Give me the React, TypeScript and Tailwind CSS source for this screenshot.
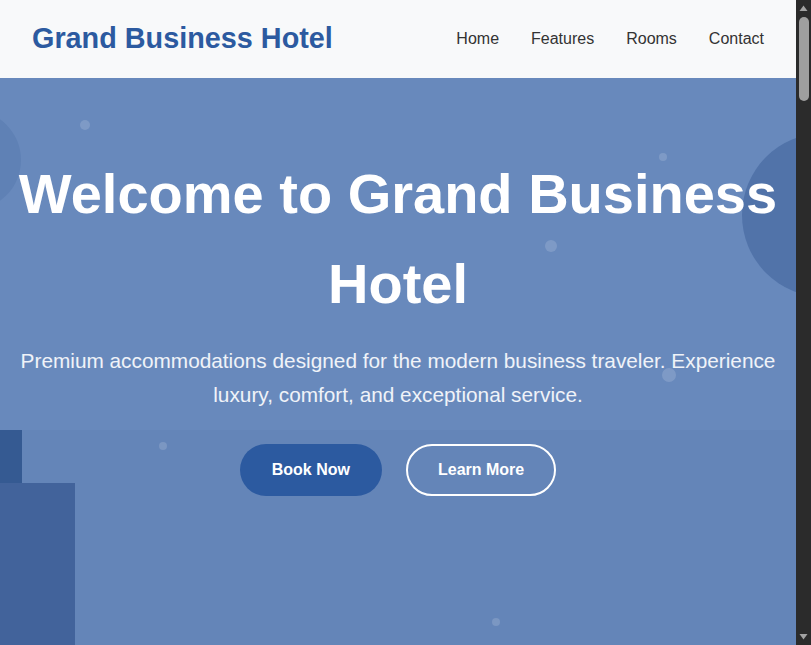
import React from "react";

const dots = [
  { x: 85, y: 125, r: 5 },
  { x: 663, y: 157, r: 4 },
  { x: 551, y: 246, r: 6 },
  { x: 669, y: 375, r: 7 },
  { x: 163, y: 446, r: 4 },
  { x: 496, y: 622, r: 4 },
];

function FakeScrollbar() {
  return (
    <div className="flex h-screen w-[15px] shrink-0 flex-col items-center bg-[#2b2b2b]">
      <svg width="15" height="17" viewBox="0 0 15 17" className="shrink-0">
        <path d="M3.5 11 L7.5 5.5 L11.5 11 Z" fill="#a3a3a3" />
      </svg>
      <div className="flex-1 w-full px-[2px]">
        <div className="h-[84px] w-[10px] mx-auto rounded-full bg-[#9f9f9f]" />
      </div>
      <svg width="15" height="17" viewBox="0 0 15 17" className="shrink-0">
        <path d="M3.5 6 L7.5 11.5 L11.5 6 Z" fill="#a3a3a3" />
      </svg>
    </div>
  );
}

export default function App() {
  return (
    <div
      className="flex h-screen overflow-hidden bg-white text-[#333]"
      style={{ fontFamily: '"Liberation Sans", Arial, sans-serif' }}
    >
      <div className="min-w-0 flex-1 overflow-y-auto [scrollbar-width:none]">
        <header className="sticky top-0 z-20 flex h-[78px] items-center justify-between bg-[#f8f9fa] px-8">
          <div className="text-[1.8rem] font-bold text-[#2c5aa0]">Grand Business Hotel</div>
          <nav className="flex gap-8 text-base text-[#333]">
            <a href="#home">Home</a>
            <a href="#features">Features</a>
            <a href="#rooms">Rooms</a>
            <a href="#contact">Contact</a>
          </nav>
        </header>

        <section
          id="home"
          className="relative -mt-[78px] flex h-screen items-center justify-center overflow-hidden bg-[#6889bc] px-4 text-center text-white"
        >
          <div className="absolute inset-x-0 bottom-0 h-1/3 bg-[#6485b8]">
            <div className="absolute left-0 top-0 h-[53px] w-[22px] bg-[#355a92]" />
            <div className="absolute bottom-0 left-0 h-[162px] w-[75px] bg-[#42639b]" />
          </div>
          <div className="absolute left-[-79px] top-[110px] h-[100px] w-[100px] rounded-full bg-[#5f81b5]" />
          <div className="absolute left-[742px] top-[133px] h-[164px] w-[164px] rounded-full bg-[#5173a9]" />
          {dots.map((d, i) => (
            <div
              key={i}
              className="absolute rounded-full bg-white/15"
              style={{ left: d.x - d.r, top: d.y - d.r, width: d.r * 2, height: d.r * 2 }}
            />
          ))}

          <div className="relative z-10 w-full">
            <h1 className="mb-4 text-[3.5rem] font-bold leading-[1.6]">Welcome to Grand Business Hotel</h1>
            <p className="mx-auto mb-[33px] max-w-[770px] text-[1.3rem] leading-[1.6] text-white/90">
              Premium accommodations designed for the modern business traveler. Experience luxury, comfort, and
              exceptional service.
            </p>
            <div className="flex justify-center gap-6">
              <a
                href="#rooms"
                className="rounded-full bg-[#2c5aa0] px-8 py-4 text-base font-bold leading-5 text-white"
              >
                Book Now
              </a>
              <a
                href="#features"
                className="rounded-full border-2 border-white px-[30px] py-[14px] text-base font-bold leading-5 text-white"
              >
                Learn More
              </a>
            </div>
          </div>
        </section>

        <section id="features" className="min-h-[1400px] bg-[#f8f9fa] px-8 py-20 text-center">
          <h2 className="mb-10 text-[2.5rem] font-bold text-[#2c5aa0]">Hotel Features</h2>
          <div className="grid grid-cols-2 gap-8">
            {["Business Center", "High-Speed WiFi", "Meeting Rooms", "Fitness Center", "Restaurant", "Airport Shuttle"].map(
              (f) => (
                <div key={f} className="rounded-xl bg-white p-8 shadow">
                  <h3 className="mb-2 text-xl font-bold text-[#2c5aa0]">{f}</h3>
                  <p className="text-[#555]">Everything you need for a productive and comfortable stay.</p>
                </div>
              )
            )}
          </div>
        </section>

        <section id="rooms" className="min-h-[1500px] bg-white px-8 py-20 text-center">
          <h2 className="mb-10 text-[2.5rem] font-bold text-[#2c5aa0]">Our Rooms</h2>
          <div className="grid grid-cols-1 gap-8">
            {["Executive Room", "Business Suite", "Presidential Suite"].map((r) => (
              <div key={r} className="h-[360px] rounded-xl bg-[#f8f9fa] p-8 shadow">
                <h3 className="mb-2 text-xl font-bold text-[#2c5aa0]">{r}</h3>
                <p className="text-[#555]">Spacious, elegant and designed for work and rest.</p>
              </div>
            ))}
          </div>
        </section>

        <section id="contact" className="min-h-[900px] bg-[#f8f9fa] px-8 py-20 text-center">
          <h2 className="mb-10 text-[2.5rem] font-bold text-[#2c5aa0]">Contact Us</h2>
          <p className="text-[#555]">123 Business Avenue, Downtown</p>
        </section>

        <footer className="bg-[#2c5aa0] py-8 text-center text-white">© 2024 Grand Business Hotel</footer>
      </div>
      <FakeScrollbar />
    </div>
  );
}
